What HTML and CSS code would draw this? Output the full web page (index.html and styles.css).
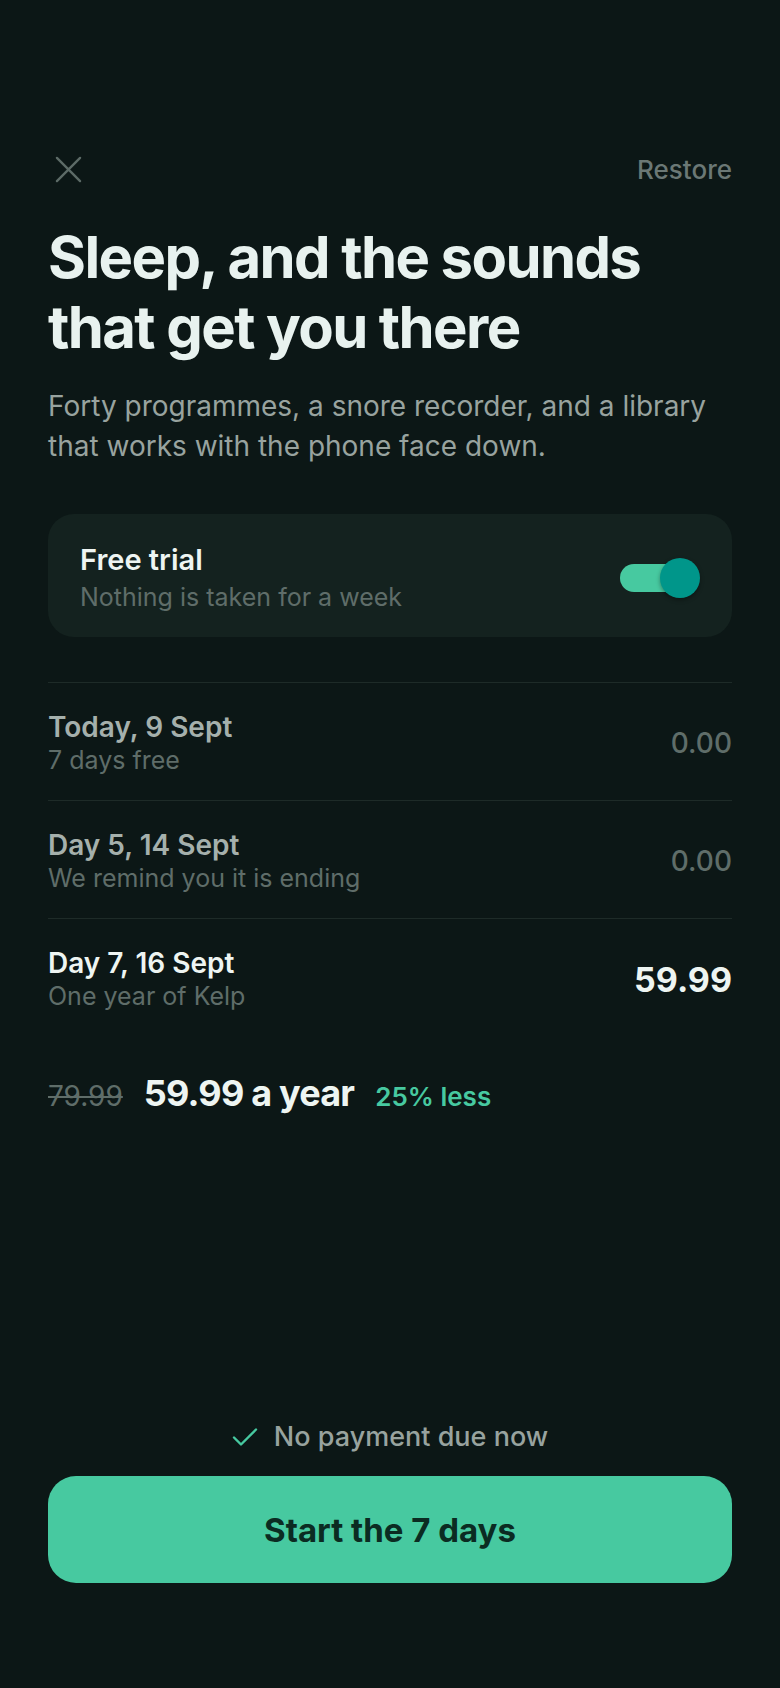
FILE: index.html
```html
<!DOCTYPE html>
<html lang="en">
<head>
    <meta charset="UTF-8">
    <meta name="viewport" content="width=device-width, initial-scale=1.0">
    <title>Kelp — Free trial</title>
    <link rel="stylesheet" href="styles.css">
</head>
<body>
    <div class="page">
        <!-- Barra superior -->
        <div class="topbar">
            <button class="close-button" aria-label="Close">
                <svg width="28" height="28" viewBox="0 0 28 28" fill="none">
                    <path d="M2 2 L26 26 M26 2 L2 26" stroke="currentColor" stroke-width="2.4" stroke-linecap="round"/>
                </svg>
            </button>
            <a class="restore" href="#">Restore</a>
        </div>

        <h1>Sleep, and the sounds that get you there</h1>
        <p class="lead">Forty programmes, a snore recorder, and a library that works with the phone face down.</p>

        <!-- Cartão do teste grátis -->
        <div class="trial-card">
            <div>
                <div class="trial-title">Free trial</div>
                <div class="trial-sub">Nothing is taken for a week</div>
            </div>
            <div class="toggle">
                <span class="toggle-track"></span>
                <span class="toggle-thumb"></span>
            </div>
        </div>

        <!-- Linha do tempo -->
        <div class="timeline">
            <div class="step">
                <div>
                    <div class="step-title">Today, 9 Sept</div>
                    <div class="step-sub">7 days free</div>
                </div>
                <div class="step-amount">0.00</div>
            </div>
            <div class="step">
                <div>
                    <div class="step-title">Day 5, 14 Sept</div>
                    <div class="step-sub">We remind you it is ending</div>
                </div>
                <div class="step-amount">0.00</div>
            </div>
            <div class="step step-final">
                <div>
                    <div class="step-title">Day 7, 16 Sept</div>
                    <div class="step-sub">One year of Kelp</div>
                </div>
                <div class="step-amount">59.99</div>
            </div>
        </div>

        <div class="price">
            <span class="price-old">79.99</span>
            <span class="price-new">59.99 a year</span>
            <span class="price-save">25% less</span>
        </div>

        <!-- Rodapé -->
        <div class="footer">
            <div class="note">
                <svg width="26" height="20" viewBox="0 0 26 20" fill="none">
                    <path d="M2 10.5 L9 17.5 L24 2.5" stroke="#47c9a0" stroke-width="2.4" stroke-linecap="round" stroke-linejoin="round"/>
                </svg>
                <span>No payment due now</span>
            </div>
            <button class="cta">Start the 7 days</button>
        </div>
    </div>
</body>
</html>
```

FILE: styles.css
```css
/* Estilo do corpo */
body {
    font-family: Inter, "Noto Sans", sans-serif;
    background-color: #0c1716;
    color: #e8f2ef;
    margin: 0;
    padding: 0;
}

/* Contêiner principal */
.page {
    min-height: 100vh;
    box-sizing: border-box;
    padding: 148px 48px 105px;
    display: flex;
    flex-direction: column;
}

/* Barra superior */
.topbar {
    height: 42px;
    display: flex;
    justify-content: space-between;
    align-items: center;
}

.close-button {
    background: none;
    border: none;
    padding: 0;
    margin-left: 7px;
    color: #5d6b67;
    display: flex;
    cursor: pointer;
}

.close-button svg {
    width: 27px;
    height: 27px;
}

.restore {
    color: #6b7875;
    font-size: 26px;
    font-weight: 500;
    text-decoration: none;
}

/* Título */
h1 {
    margin: 32px 0 0;
    font-size: 58px;
    line-height: 70px;
    font-weight: 700;
    letter-spacing: -1.6px;
    color: #e8f2ef;
}

.lead {
    margin: 24px 0 0;
    font-size: 28px;
    line-height: 40px;
    color: #98a39f;
}

/* Cartão do teste */
.trial-card {
    margin-top: 48px;
    background-color: #14221f;
    border-radius: 26px;
    padding: 28px 32px 24px;
    display: flex;
    justify-content: space-between;
    align-items: center;
}

.trial-title {
    font-size: 29px;
    line-height: 36px;
    font-weight: 600;
    color: #eef5f2;
}

.trial-sub {
    margin-top: 3px;
    font-size: 25px;
    line-height: 32px;
    color: #5f6d69;
}

.toggle {
    position: relative;
    width: 80px;
    height: 40px;
}

.toggle-track {
    position: absolute;
    left: 0;
    top: 6px;
    width: 70px;
    height: 28px;
    border-radius: 14px;
    background-color: #47c9a0;
}

.toggle-thumb {
    position: absolute;
    right: 0;
    top: 0;
    width: 40px;
    height: 40px;
    border-radius: 50%;
    background-color: #00968a;
    box-shadow: 0 2px 4px rgba(0, 0, 0, 0.35);
}

/* Linha do tempo */
.timeline {
    margin-top: 45px;
}

.step {
    border-top: 1px solid #1e2b28;
    padding: 27px 0 24px;
    display: flex;
    justify-content: space-between;
    align-items: center;
}

.step-title {
    font-size: 28px;
    line-height: 34px;
    font-weight: 600;
    color: #a5b0ac;
}

.step-sub {
    font-size: 25px;
    line-height: 32px;
    color: #5f6d69;
}

.step-amount {
    font-size: 28px;
    font-weight: 500;
    color: #5f6d69;
}

.step-final .step-title {
    color: #eef5f2;
}

.step-final .step-amount {
    font-size: 34px;
    font-weight: 700;
    color: #eef5f2;
}

/* Preço */
.price {
    margin-top: 35px;
    display: flex;
    align-items: baseline;
    gap: 21px;
}

.price-old {
    font-size: 28px;
    color: #5f6d69;
    text-decoration: line-through;
}

.price-new {
    font-size: 36px;
    line-height: 44px;
    font-weight: 700;
    letter-spacing: -0.8px;
    color: #eef5f2;
}

.price-save {
    font-size: 26px;
    font-weight: 600;
    color: #47c9a0;
}

/* Rodapé */
.footer {
    margin-top: auto;
}

.note {
    display: flex;
    justify-content: center;
    align-items: center;
    gap: 16px;
    font-size: 27px;
    line-height: 34px;
    font-weight: 500;
    color: #98a39f;
}

.cta {
    margin-top: 22px;
    width: 100%;
    height: 107px;
    border: none;
    border-radius: 28px;
    background-color: #47c9a0;
    color: #0b2b22;
    font-family: inherit;
    font-size: 33px;
    font-weight: 700;
    cursor: pointer;
}
```
